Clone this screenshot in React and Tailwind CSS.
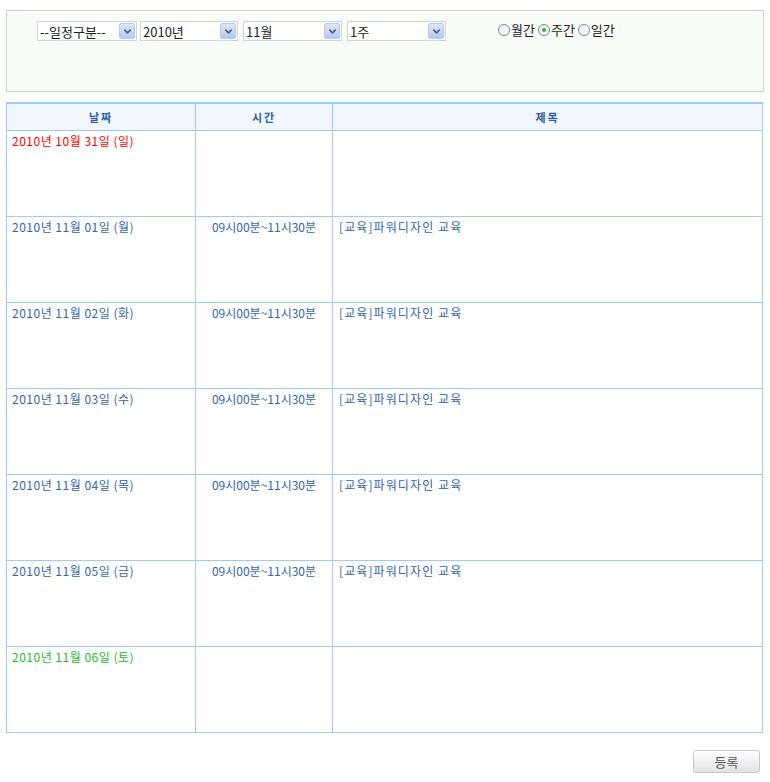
import { ChevronDown } from "lucide-react";

const rows = [
  { date: "2010년 10월 31일 (일)", color: "text-[#ff0000]", time: "", title: "" },
  { date: "2010년 11월 01일 (월)", color: "text-[#3366aa]", time: "09시00분~11시30분", title: "[교육]파워디자인 교육" },
  { date: "2010년 11월 02일 (화)", color: "text-[#3366aa]", time: "09시00분~11시30분", title: "[교육]파워디자인 교육" },
  { date: "2010년 11월 03일 (수)", color: "text-[#3366aa]", time: "09시00분~11시30분", title: "[교육]파워디자인 교육" },
  { date: "2010년 11월 04일 (목)", color: "text-[#3366aa]", time: "09시00분~11시30분", title: "[교육]파워디자인 교육" },
  { date: "2010년 11월 05일 (금)", color: "text-[#3366aa]", time: "09시00분~11시30분", title: "[교육]파워디자인 교육" },
  { date: "2010년 11월 06일 (토)", color: "text-[#22bb33]", time: "", title: "" },
];

function FakeSelect({ label, className }) {
  return (
    <div className={`flex items-center justify-between h-[20px] bg-white border border-[#d4d4d4] pl-[2px] pr-[1px] ${className}`}>
      <span className="text-[13px] text-[#222] leading-none">{label}</span>
      <span className="flex items-center justify-center w-[16px] h-[16px] rounded-[2px] bg-gradient-to-b from-[#dde7fb] to-[#b4c8f0] border border-[#b9c9ec]">
        <ChevronDown size={11} strokeWidth={3.5} className="text-[#4d6185]" />
      </span>
    </div>
  );
}

function Radio({ checked, label }) {
  return (
    <label className="flex items-center text-[13px] leading-[18px] text-[#222]">
      <span className="flex items-center justify-center w-[12px] h-[12px] rounded-full border border-[#7b8aa3] bg-gradient-to-br from-[#e5e9ef] to-white mr-[1px]">
        {checked && <span className="w-[4px] h-[4px] rounded-full bg-[#2fb52f]" />}
      </span>
      {label}
    </label>
  );
}

export default function App() {
  return (
    <div className="w-[770px] h-[782px] bg-white pt-[10px] px-[6px] font-['Noto_Sans_CJK_KR',_'Noto_Sans',_sans-serif]">
      <div className="w-[758px] h-[82px] border border-[#d2d2d2] bg-[#f7fcf7] pt-[10px] pl-[30px] flex">
        <FakeSelect label="--일정구분--" className="w-[100px]" />
        <FakeSelect label="2010년" className="w-[98px] ml-[3px]" />
        <FakeSelect label="11월" className="w-[99px] ml-[5px]" />
        <FakeSelect label="1주" className="w-[99px] ml-[5px]" />
        <div className="flex items-start gap-[3px] ml-[52px]">
          <Radio label="월간" />
          <Radio checked label="주간" />
          <Radio label="일간" />
        </div>
      </div>

      <table className="mt-[10px] w-[757px] border-collapse table-fixed text-[12px]">
        <colgroup>
          <col className="w-[189px]" />
          <col className="w-[137px]" />
          <col />
        </colgroup>
        <thead>
          <tr className="h-[27px] bg-[#f2f7ff] border-t-[2px] border-t-[#99ccff]">
            <th className="border-x border-b border-[#99ccff] text-[#2a5e9e] font-bold text-[11px] tracking-[2px]">날짜</th>
            <th className="border-x border-b border-[#99ccff] text-[#2a5e9e] font-bold text-[11px] tracking-[2px]">시간</th>
            <th className="border-x border-b border-[#99ccff] text-[#2a5e9e] font-bold text-[11px] tracking-[2px]">제목</th>
          </tr>
        </thead>
        <tbody>
          {rows.map((r) => (
            <tr key={r.date} className="h-[86px]">
              <td className={`align-top border border-[#99ccff] pl-[5px] pt-[2px] leading-[16px] tracking-[0.5px] ${r.color}`}>{r.date}</td>
              <td className="align-top border border-[#99ccff] pt-[2px] leading-[16px] text-center text-[#3366aa]">{r.time}</td>
              <td className="align-top border border-[#99ccff] pl-[6px] pt-[2px] leading-[16px] tracking-[1.1px] text-[#3366aa]">{r.title}</td>
            </tr>
          ))}
        </tbody>
      </table>

      <div className="flex justify-end mt-[17px] pr-[4px]">
        <button className="w-[67px] h-[23px] rounded-[3px] border border-[#c8c8c8] bg-gradient-to-b from-white to-[#e2e2e2] text-[13px] text-[#555] leading-none">
          등록
        </button>
      </div>
    </div>
  );
}
